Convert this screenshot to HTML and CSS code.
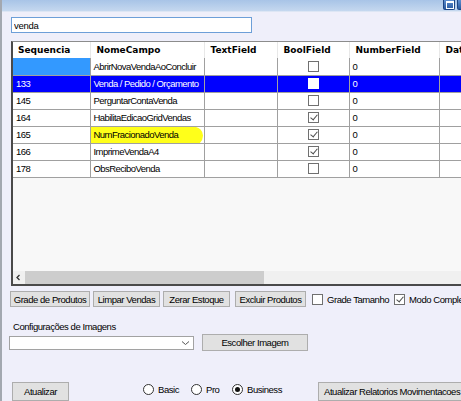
FILE: index.html
```html
<!DOCTYPE html>
<html lang="pt">
<head>
<meta charset="UTF-8">
<meta name="viewport" content="width=device-width, initial-scale=1.0">
<link rel="stylesheet" href="styles.css">
<title>Configurações</title>
</head>
<body>
<div class="window">
    <div class="titlebar">
        <span class="win-btn max"></span>
        <span class="win-btn close"></span>
    </div>

    <div class="form">
        <input class="search" type="text" value="venda">

        <div class="grid">
            <table class="fields">
                <colgroup>
                    <col style="width: 77px">
                    <col style="width: 114px">
                    <col style="width: 73px">
                    <col style="width: 72px">
                    <col style="width: 90px">
                    <col style="width: 100px">
                </colgroup>
                <thead>
                    <tr>
                        <th>Sequencia</th>
                        <th>NomeCampo</th>
                        <th>TextField</th>
                        <th>BoolField</th>
                        <th>NumberField</th>
                        <th>DataField</th>
                    </tr>
                </thead>
                <tbody>
                    <tr>
                        <td class="current"></td>
                        <td>AbrirNovaVendaAoConcluir</td>
                        <td></td>
                        <td class="bool"><span class="chk"></span></td>
                        <td>0</td>
                        <td></td>
                    </tr>
                    <tr class="selected">
                        <td>133</td>
                        <td>Venda / Pedido / Orçamento</td>
                        <td></td>
                        <td class="bool"><span class="chk"></span></td>
                        <td>0</td>
                        <td></td>
                    </tr>
                    <tr>
                        <td>145</td>
                        <td>PerguntarContaVenda</td>
                        <td></td>
                        <td class="bool"><span class="chk"></span></td>
                        <td>0</td>
                        <td></td>
                    </tr>
                    <tr>
                        <td>164</td>
                        <td>HabilitaEdicaoGridVendas</td>
                        <td></td>
                        <td class="bool"><span class="chk on"></span></td>
                        <td>0</td>
                        <td></td>
                    </tr>
                    <tr>
                        <td>165</td>
                        <td class="marked"><span>NumFracionadoVenda</span></td>
                        <td></td>
                        <td class="bool"><span class="chk on"></span></td>
                        <td>0</td>
                        <td></td>
                    </tr>
                    <tr>
                        <td>166</td>
                        <td>ImprimeVendaA4</td>
                        <td></td>
                        <td class="bool"><span class="chk on"></span></td>
                        <td>0</td>
                        <td></td>
                    </tr>
                    <tr>
                        <td>178</td>
                        <td>ObsReciboVenda</td>
                        <td></td>
                        <td class="bool"><span class="chk"></span></td>
                        <td>0</td>
                        <td></td>
                    </tr>
                </tbody>
            </table>
            <div class="grid-empty"></div>
            <div class="hscroll">
                <span class="arrow">
                    <svg width="12" height="13" viewBox="0 0 12 13"><path d="M6.5 4 4 6.5 6.5 9" fill="none" stroke="#333" stroke-width="1.3"/></svg>
                </span>
                <div class="track"><div class="thumb"></div></div>
                <span class="arrow">
                    <svg width="12" height="13" viewBox="0 0 12 13"><path d="M5 4 7.5 6.5 5 9" fill="none" stroke="#333" stroke-width="1.3"/></svg>
                </span>
            </div>
        </div>

        <div class="actions">
            <button class="btn w-grade">Grade de Produtos</button>
            <button class="btn w-limpar">Limpar Vendas</button>
            <button class="btn w-zerar">Zerar Estoque</button>
            <button class="btn w-excluir">Excluir Produtos</button>
            <label class="check"><span class="chk"></span>Grade Tamanho</label>
            <label class="check"><span class="chk on"></span>Modo Completo</label>
        </div>

        <div class="images-label">Configurações de Imagens</div>
        <div class="images">
            <div class="combo">
                <svg width="9" height="6" viewBox="0 0 9 6"><path d="M1 1.5 4.5 4.5 8 1.5" fill="none" stroke="#555" stroke-width="1"/></svg>
            </div>
            <button class="btn w-escolher">Escolher Imagem</button>
        </div>

        <div class="footer">
            <button class="btn w-atualizar">Atualizar</button>
            <div class="plans">
                <label class="radio w-basic"><span class="dot"></span>Basic</label>
                <label class="radio w-pro"><span class="dot"></span>Pro</label>
                <label class="radio w-business"><span class="dot on"></span>Business</label>
            </div>
            <button class="btn w-relatorios">Atualizar Relatorios Movimentacoes</button>
        </div>
    </div>
</div>
</body>
</html>
```

FILE: styles.css
```css
* {
    box-sizing: border-box;
}

body {
    margin: 0;
    width: 461px;
    height: 401px;
    overflow: hidden;
    background: #efeffa;
    font-family: "Liberation Sans", Arial, sans-serif;
    font-size: 9.5px;
    letter-spacing: -0.45px;
    color: #000;
}

.window {
    width: 461px;
    height: 401px;
    overflow: hidden;
    border-left: 2px solid #a3a8b0;
}

/* barra de titulo */
.titlebar {
    height: 12px;
    display: flex;
    justify-content: flex-end;
    align-items: flex-start;
    gap: 2px;
    background: linear-gradient(#a8c4e7, #c5d8ef);
    border-bottom: 1px solid #dde6f4;
}

.win-btn {
    flex-shrink: 0;
    width: 12px;
    height: 10px;
    border: 1px solid #1d4585;
    border-top: none;
    border-radius: 0 0 2px 2px;
    background: linear-gradient(#5f8fd0, #2a5aa0);
    position: relative;
}

.win-btn.max::after {
    content: "";
    position: absolute;
    left: 2px;
    top: 1px;
    width: 6px;
    height: 5px;
    border: 1px solid #fff;
    border-top-width: 2px;
}

.win-btn.close {
    margin-right: -8px;
}

.form {
    padding-top: 5px;
}

.search {
    display: block;
    margin-left: 9px;
    width: 241px;
    height: 16px;
    border: 1px solid #6d9fd8;
    padding: 0 2px;
    font-family: inherit;
    font-size: 9.5px;
    letter-spacing: -0.3px;
    outline: none;
}

/* grade de campos */
.grid {
    margin-top: 8px;
    margin-left: 9px;
    width: 470px;
    height: 245px;
    display: flex;
    flex-direction: column;
    background: #f8f8f8;
    border-top: 1px solid #8c8c8c;
    border-left: 2px solid #4a4a4a;
    border-bottom: 2px solid #4a4a4a;
}

.fields {
    flex-shrink: 0;
    border-collapse: collapse;
    table-layout: fixed;
    width: 526px;
}

.fields th {
    height: 16px;
    padding: 0 0 0 6px;
    text-align: left;
    font-family: "DejaVu Sans", Verdana, sans-serif;
    font-size: 9px;
    font-weight: bold;
    letter-spacing: 0;
    background: #fff;
    border-right: 1px solid #e8e8e8;
    white-space: nowrap;
    overflow: hidden;
}

.fields th:first-child {
    padding-left: 5px;
}

.fields td {
    height: 17px;
    padding: 0 0 0 3px;
    background: #fff;
    border: 1px solid #a0a0a0;
    border-top: none;
    border-left: none;
    letter-spacing: -0.55px;
    white-space: nowrap;
    overflow: hidden;
}

.fields td.bool {
    padding: 0;
    text-align: center;
}

.fields td.current {
    background: #3399ff;
}

.fields tr.selected td {
    background: #0000ff;
    color: #fff;
}

.fields tr.selected .chk {
    border-color: #fff;
}

.fields td.marked {
    position: relative;
}

.fields td.marked::before {
    content: "";
    position: absolute;
    left: -1px;
    right: 1px;
    top: -1px;
    bottom: -2px;
    background: #ffff1a;
    border-radius: 2px 12px 14px 3px;
    transform: rotate(1deg);
}

.fields td.marked span {
    position: relative;
}

.grid-empty {
    flex: 1;
}

.hscroll {
    flex-shrink: 0;
    height: 13px;
    display: flex;
    background: #f0f0f0;
}

.hscroll .arrow {
    flex-shrink: 0;
    width: 12px;
    height: 13px;
    display: flex;
}

.track {
    flex: 1;
    display: flex;
    align-items: center;
}

.thumb {
    width: 239px;
    height: 13px;
    background: #cdcdcd;
}

.hscroll .arrow:last-child {
    margin-right: 9px;
}

/* caixas de selecao */
.chk {
    flex-shrink: 0;
    display: inline-block;
    width: 11px;
    height: 11px;
    border: 1px solid #707070;
    background: #fff;
    vertical-align: middle;
    position: relative;
}

.chk.on::after {
    content: "";
    position: absolute;
    left: 3px;
    top: 0;
    width: 3px;
    height: 6px;
    border: solid #4d4d4d;
    border-width: 0 1px 1px 0;
    transform: rotate(40deg);
}

.btn {
    flex-shrink: 0;
    height: 16px;
    padding: 0;
    border: 1px solid #adadad;
    background: #e1e1e1;
    font-family: inherit;
    font-size: 9.5px;
    letter-spacing: -0.45px;
    color: #000;
    text-align: center;
    white-space: nowrap;
}

.actions {
    margin-top: 5px;
    margin-left: 8px;
    display: flex;
    align-items: center;
    white-space: nowrap;
}

.actions .btn + .btn {
    margin-left: 3px;
}

.w-grade { width: 80px; }
.w-limpar { width: 67px; }
.w-zerar { width: 67px; }
.w-excluir { width: 71px; margin-left: 5px !important; }

.check {
    flex-shrink: 0;
    display: flex;
    align-items: center;
    gap: 4px;
    margin-left: 6px;
}

.check + .check {
    margin-left: 5px;
}

.images-label {
    margin-top: 14px;
    margin-left: 11px;
    height: 12px;
    line-height: 12px;
}

.images {
    margin-top: 1px;
    margin-left: 7px;
    display: flex;
    align-items: center;
    gap: 8px;
}

.combo {
    flex-shrink: 0;
    width: 185px;
    height: 14px;
    background: #fff;
    border: 1px solid #a2a2a2;
    display: flex;
    justify-content: flex-end;
    align-items: center;
    padding-right: 3px;
}

.w-escolher {
    width: 106px;
    height: 17px;
}

.footer {
    margin-top: 31px;
    margin-left: 10px;
    display: flex;
    align-items: flex-start;
}

.w-atualizar {
    width: 57px;
    height: 19px;
}

.plans {
    flex-shrink: 0;
    display: flex;
    margin-left: 74px;
    margin-top: 2px;
}

.radio {
    flex-shrink: 0;
    display: flex;
    align-items: center;
    gap: 4px;
}

.w-basic { width: 48px; }
.w-pro { width: 41px; }
.w-business { width: 86px; }

.dot {
    flex-shrink: 0;
    width: 11px;
    height: 11px;
    border: 1px solid #333;
    border-radius: 50%;
    background: #fff;
    position: relative;
}

.dot.on::after {
    content: "";
    position: absolute;
    left: 2px;
    top: 2px;
    width: 5px;
    height: 5px;
    border-radius: 50%;
    background: #111;
}

.w-relatorios {
    width: 150px;
    height: 19px;
    text-align: left;
    padding-left: 5px;
}
```
